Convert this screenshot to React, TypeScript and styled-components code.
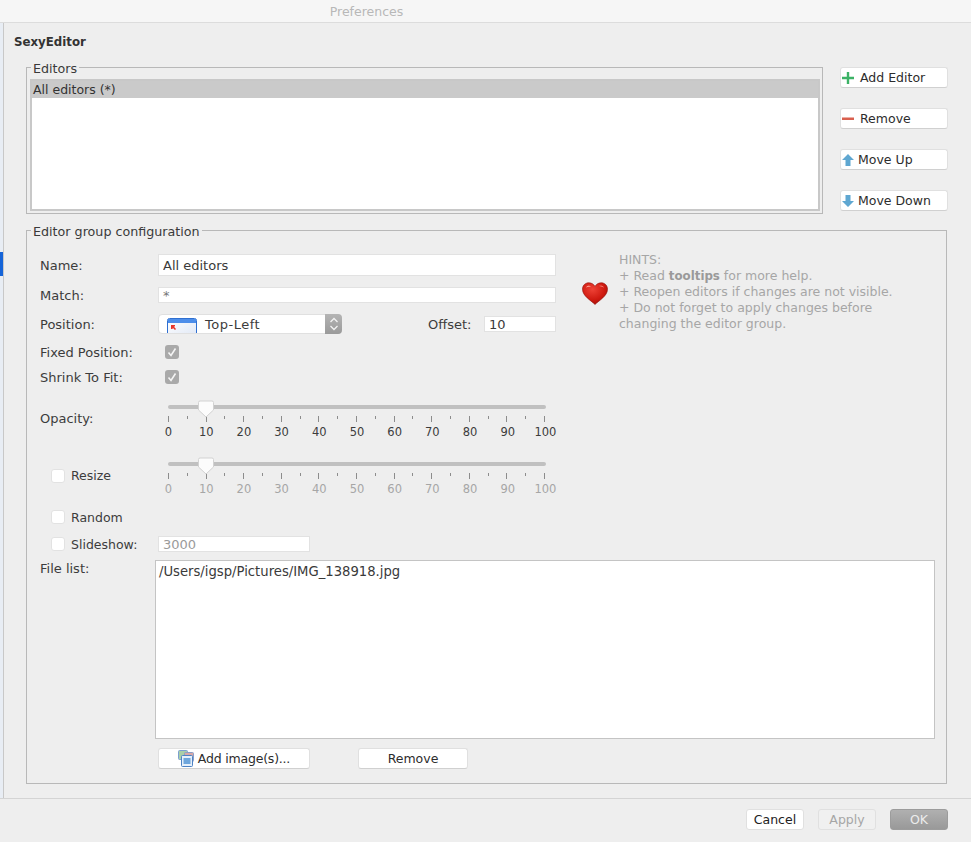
import styled, { createGlobalStyle } from "styled-components";

const GlobalStyle = createGlobalStyle`
    html, body {
        margin: 0;
        padding: 0;
        background: #eeeeee;
    }
    * {
        box-sizing: border-box;
    }
`

const FONT = `"DejaVu Sans", "Liberation Sans", sans-serif`

const PlusIcon = () => (
    <svg width="14" height="14" viewBox="0 0 14 14">
        <path d="M5.800 1h2.400v4.800H13v2.400H8.200V13H5.800V8.200H1V5.800h4.800z" fill="#3cb266" />
    </svg>
)

const MinusIcon = () => (
    <svg width="14" height="14" viewBox="0 0 14 14">
        <rect x="1" y="5.500" width="12" height="2.500" fill="#d9604f" />
    </svg>
)

const ArrowIcon = ({ down }: { down?: boolean }) => (
    <svg width="14" height="14" viewBox="0 0 14 14">
        <path
            d={down ? "M4.500 1h5v6H13l-6 6-6-6h3.500z" : "M7 1l6 6H9.500v6h-5V7H1z"}
            fill="#5fa7d1"
        />
    </svg>
)

const Heart = () => (
    <svg width="26" height="23" viewBox="0 0 26 23">
        <defs>
            <radialGradient id="heartFill" cx="0.4" cy="0.3" r="0.8">
                <stop offset="0" stopColor="#ee4236" />
                <stop offset="0.6" stopColor="#cf1a10" />
                <stop offset="1" stopColor="#9c0d08" />
            </radialGradient>
        </defs>
        <path
            d="M13 22.500C9 18.500 0.500 14 0.500 7.200 0.500 3.200 3.500 0.800 6.800 0.800c2.800 0 5 1.500 6.200 3.600C14.200 2.300 16.400 0.800 19.200 0.800c3.300 0 6.300 2.400 6.300 6.400C25.500 14 17 18.500 13 22.500z"
            fill="url(#heartFill)"
            stroke="#8d0f0a"
            strokeWidth="0.600"
        />
        <path d="M4 5.500c1-1.800 3.500-2.200 5-1-1.800 0-3.500 0.300-5 1z" fill="#ffb0a4" />
        <path d="M17 4c1.800-0.800 4-0.300 5 1.500-1.600-0.800-3.200-1.200-5-1.500z" fill="#ff9f93" />
    </svg>
)

const PositionIcon = () => (
    <svg width="30" height="15" viewBox="0 0 30 15">
        <defs>
            <linearGradient id="windowFill" x1="0" y1="0" x2="1" y2="1">
                <stop offset="0" stopColor="#ffffff" />
                <stop offset="1" stopColor="#dfe7f5" />
            </linearGradient>
        </defs>
        <rect x="0.500" y="0.500" width="29" height="18" rx="2" fill="url(#windowFill)" stroke="#2f6fd0" />
        <rect x="1" y="1" width="28" height="4" fill="#4d8eea" />
        <path d="M4 7h4v1.500H6.800L9 11l-1 1-2.300-2.300V11H4z" fill="#e8352a" />
    </svg>
)

const ImagesIcon = () => (
    <svg width="16" height="17" viewBox="0 0 16 17">
        <rect x="0.500" y="0.500" width="9" height="9" rx="1" fill="#a9cfa8" stroke="#7b9fd0" />
        <rect x="6.500" y="2.500" width="9" height="9" rx="1" fill="#d8a8a8" stroke="#8a9fc8" />
        <rect x="3.500" y="5.500" width="11" height="11" rx="1" fill="#e6f0fb" stroke="#4d82c4" />
        <rect x="5.500" y="8" width="7" height="6" fill="#6ea6dc" />
    </svg>
)

const CheckIcon = () => (
    <svg width="14" height="14" viewBox="0 0 14 14">
        <path d="M3.500 7.500l2.500 3 4.500-7" fill="none" stroke="#f4f4f4" strokeWidth="1.600" />
    </svg>
)

const StepperIcon = () => (
    <svg width="10" height="16" viewBox="0 0 10 16">
        <path d="M1.500 6L5 2.500 8.500 6M1.500 10L5 13.500 8.500 10" fill="none" stroke="#f2f2f2" strokeWidth="1.300" />
    </svg>
)

const ThumbIcon = () => (
    <svg width="18" height="18" viewBox="0 0 18 18">
        <path
            d="M3 1h12a1.500 1.500 0 0 1 1.500 1.500V10L9 17 1.500 10V2.500A1.500 1.500 0 0 1 3 1z"
            fill="#fcfcfc"
            stroke="#d2d2d2"
        />
    </svg>
)

type SliderPropsType = {
    value: number
    disabled?: boolean
}

const SCALE = Array.from({ length: 21 }, (_, i) => i * 5)
const NUMBERS = SCALE.filter((n) => n % 10 === 0)

const Slider = (props: SliderPropsType) => {
    return (
        <SliderBox>
            <SliderTrack />
            <SliderThumb style={{ left: `${(props.value / 100) * 377 - 9}px` }}>
                <ThumbIcon />
            </SliderThumb>
            <Ticks>
                {SCALE.map((n) => (
                    <Tick key={n} $major={n % 10 === 0} />
                ))}
            </Ticks>
            <TickLabels>
                {NUMBERS.map((n) => (
                    <TickLabel key={n} $disabled={props.disabled}>
                        <span>{n}</span>
                    </TickLabel>
                ))}
            </TickLabels>
        </SliderBox>
    );
}

const App = () => {
    return (
        <Window>
            <GlobalStyle />
            <TitleBar>Preferences</TitleBar>
            <Body>
                <Sidebar>
                    <SidebarMark />
                </Sidebar>
                <Main>
                    <PageTitle>SexyEditor</PageTitle>
                    <EditorsRow>
                        <EditorsGroup>
                            <GroupLegend $offset={1}>Editors</GroupLegend>
                            <EditorsList>
                                <EditorsItem>All editors (*)</EditorsItem>
                            </EditorsList>
                        </EditorsGroup>
                        <SideButtons>
                            <SideButton $textGap={5}><PlusIcon />Add Editor</SideButton>
                            <SideButton $textGap={5}><MinusIcon />Remove</SideButton>
                            <SideButton $textGap={3}><ArrowIcon />Move Up</SideButton>
                            <SideButton $textGap={3}><ArrowIcon down />Move Down</SideButton>
                        </SideButtons>
                    </EditorsRow>

                    <ConfigGroup>
                        <GroupLegend $offset={-9}>Editor group configuration</GroupLegend>
                        <TopArea>
                            <FormColumn>
                                <NameRow>
                                    <FieldLabel>Name:</FieldLabel>
                                    <NameInput readOnly value="All editors" />
                                </NameRow>
                                <MatchRow>
                                    <FieldLabel>Match:</FieldLabel>
                                    <MatchInput readOnly value="*" />
                                </MatchRow>
                                <PositionRow>
                                    <FieldLabel>Position:</FieldLabel>
                                    <SelectBox>
                                        <SelectIcon><PositionIcon /></SelectIcon>
                                        <SelectText>Top-Left</SelectText>
                                        <SelectStepper><StepperIcon /></SelectStepper>
                                    </SelectBox>
                                    <OffsetLabel>Offset:</OffsetLabel>
                                    <OffsetInput readOnly value="10" />
                                </PositionRow>
                                <CheckRow>
                                    <FieldLabel>Fixed Position:</FieldLabel>
                                    <GrayCheck><CheckIcon /></GrayCheck>
                                </CheckRow>
                                <CheckRow>
                                    <FieldLabel>Shrink To Fit:</FieldLabel>
                                    <GrayCheck><CheckIcon /></GrayCheck>
                                </CheckRow>
                                <OpacityRow>
                                    <FieldLabel>Opacity:</FieldLabel>
                                    <Slider value={10} />
                                </OpacityRow>
                                <ResizeRow>
                                    <OptionLabel $width={118}>
                                        <EmptyCheck />
                                        Resize
                                    </OptionLabel>
                                    <Slider value={10} disabled />
                                </ResizeRow>
                                <RandomRow>
                                    <OptionLabel $width={118}>
                                        <EmptyCheck />
                                        Random
                                    </OptionLabel>
                                </RandomRow>
                                <SlideshowRow>
                                    <OptionLabel $width={118}>
                                        <EmptyCheck />
                                        Slideshow:
                                    </OptionLabel>
                                    <SlideshowInput readOnly value="3000" />
                                </SlideshowRow>
                            </FormColumn>
                            <HintsPanel>
                                <HeartBox><Heart /></HeartBox>
                                <HintsText>
                                    HINTS:<br />
                                    + Read <b>tooltips</b> for more help.<br />
                                    + Reopen editors if changes are not visible.<br />
                                    + Do not forget to apply changes before<br />
                                    changing the editor group.
                                </HintsText>
                            </HintsPanel>
                        </TopArea>
                        <FileListRow>
                            <FileListLabel>File list:</FileListLabel>
                            <FileList>/Users/igsp/Pictures/IMG_138918.jpg</FileList>
                        </FileListRow>
                        <FileButtons>
                            <FileButton $width={152}><ImagesIcon /><span>Add image(s)...</span></FileButton>
                            <FileButton $width={110}>Remove</FileButton>
                        </FileButtons>
                    </ConfigGroup>
                </Main>
            </Body>
            <Footer>
                <FooterButton>Cancel</FooterButton>
                <FooterButton $kind="disabled">Apply</FooterButton>
                <FooterButton $kind="default">OK</FooterButton>
            </Footer>
        </Window>
    );
}

export default App

const Window = styled.div`
    width: 971px;
    height: 842px;
    display: flex;
    flex-direction: column;
    overflow: hidden;
    background: #eeeeee;
    font-family: ${FONT};
    font-size: 12.5px;
    color: #3c3c3c;
`

const TitleBar = styled.div`
    height: 23px;
    flex: none;
    padding-right: 238px;
    background: #f6f6f6;
    border-bottom: 1px solid #dcdcdc;
    font-size: 12.5px;
    line-height: 23px;
    text-align: center;
    color: #b8b8b8;
`

const Body = styled.div`
    flex: 1;
    display: flex;
    min-height: 0;
`

const Sidebar = styled.div`
    width: 4px;
    flex: none;
    padding-top: 229px;
    background: #e8edf4;
    border-right: 1px solid #c8c8c8;
`

const SidebarMark = styled.div`
    height: 24px;
    background: #1564d8;
`

const Main = styled.div`
    flex: 1;
    padding: 11px 24px 0 10px;
`

const PageTitle = styled.div`
    height: 16px;
    font-size: 11.8px;
    font-weight: 700;
    line-height: 16px;
    color: #333333;
`

const EditorsRow = styled.div`
    display: flex;
    align-items: flex-start;
    gap: 17px;
    margin-top: 9px;
    padding-left: 12px;
`

const EditorsGroup = styled.fieldset`
    width: 797px;
    height: 155px;
    flex: none;
    margin: 0;
    padding: 4px 2px 2px 3px;
    border: 1px solid #b8b8b8;
`

const GroupLegend = styled.legend<{ $offset: number }>`
    margin-left: ${(p) => p.$offset}px;
    padding: 3px 2px 0;
    height: 16px;
    font-size: 12.7px;
    line-height: 14px;
    color: #3a3a3a;
`

const EditorsList = styled.div`
    height: 132px;
    background: #ffffff;
    border: 2px solid #c8c8c8;
`

const EditorsItem = styled.div`
    height: 17px;
    padding-left: 1px;
    background: #cacaca;
    line-height: 17px;
    color: #333333;
`

const SideButtons = styled.div`
    display: flex;
    flex-direction: column;
    gap: 20px;
    margin-top: 8px;
`

const SideButton = styled.div<{ $textGap: number }>`
    width: 108px;
    height: 21px;
    display: flex;
    align-items: center;
    gap: ${(p) => p.$textGap}px;
    background: #ffffff;
    border: 1px solid #e0e0e0;
    border-bottom-color: #d0d0d0;
    border-radius: 3px;
    color: #2c2c2c;
`

const ConfigGroup = styled.fieldset`
    width: 921px;
    height: 562px;
    margin: 8px 0 0 12px;
    padding: 16px 11px 0 13px;
    border: 1px solid #b8b8b8;
`

const TopArea = styled.div`
    display: flex;
    align-items: flex-start;
`

const FormColumn = styled.div`
    width: 516px;
    flex: none;
    display: flex;
    flex-direction: column;
`

const FieldRow = styled.div`
    display: flex;
    align-items: center;
`

const NameRow = styled(FieldRow)`
    height: 22px;
`

const MatchRow = styled(FieldRow)`
    height: 16px;
    margin-top: 11px;
`

const PositionRow = styled(FieldRow)`
    height: 20px;
    margin-top: 11px;
`

const CheckRow = styled(FieldRow)`
    height: 14px;
    margin-top: 11px;
`

const OpacityRow = styled(FieldRow)`
    align-items: flex-start;
    height: 40px;
    margin-top: 16px;
`

const ResizeRow = styled(FieldRow)`
    align-items: flex-start;
    height: 40px;
    margin-top: 17px;
`

const RandomRow = styled(FieldRow)`
    height: 14px;
    margin-top: 13px;
`

const SlideshowRow = styled(FieldRow)`
    height: 16px;
    margin-top: 12px;
`

const FieldLabel = styled.label`
    width: 118px;
    flex: none;
    font-size: 13px;
    color: #3c3c3c;

    ${OpacityRow} & {
        margin-top: 11px;
    }
`

const TextInput = styled.input`
    display: block;
    margin: 0;
    padding: 0 4px;
    background: #ffffff;
    border: 1px solid #e2e2e2;
    outline: none;
    font-family: ${FONT};
    font-size: 13px;
    color: #3a3a3a;
`

const NameInput = styled(TextInput)`
    width: 398px;
    height: 22px;
`

const MatchInput = styled(TextInput)`
    width: 398px;
    height: 16px;
    color: #777777;
`

const OffsetInput = styled(TextInput)`
    width: 72px;
    height: 16px;
`

const SlideshowInput = styled(TextInput)`
    width: 152px;
    height: 16px;
    color: #9a9a9a;
`

const SelectBox = styled.div`
    width: 184px;
    height: 20px;
    flex: none;
    display: flex;
    align-items: flex-end;
    background: #ffffff;
    border: 1px solid #e0e0e0;
    border-radius: 4px;
`

const SelectIcon = styled.div`
    width: 46px;
    height: 15px;
    flex: none;
    padding-left: 8px;
    overflow: hidden;
`

const SelectText = styled.div`
    flex: 1;
    align-self: center;
    font-size: 13px;
    letter-spacing: 0.5px;
    color: #3c3c3c;
`

const SelectStepper = styled.div`
    width: 17px;
    height: 20px;
    flex: none;
    align-self: center;
    display: flex;
    align-items: center;
    justify-content: center;
    margin-right: -1px;
    background: linear-gradient(#b4b4b4, #9a9a9a);
    border-radius: 0 4px 4px 0;
`

const OffsetLabel = styled.label`
    margin-left: 86px;
    width: 56px;
    flex: none;
    font-size: 13px;
    color: #3c3c3c;
`

const GrayCheck = styled.div`
    width: 14px;
    height: 14px;
    margin-left: 7px;
    background: #a9a9a9;
    border-radius: 3px;
`

const EmptyCheck = styled.div`
    width: 14px;
    height: 14px;
    flex: none;
    background: #ffffff;
    border: 1px solid #e2e2e2;
    border-radius: 3px;
`

const OptionLabel = styled.label<{ $width: number }>`
    width: ${(p) => p.$width}px;
    flex: none;
    display: flex;
    align-items: center;
    gap: 6px;
    padding-left: 11px;
    color: #3c3c3c;

    ${ResizeRow} & {
        margin-top: 11px;
    }
`

const SliderBox = styled.div`
    position: relative;
    width: 378px;
    margin-left: 10px;
    padding-top: 5px;
`

const SliderTrack = styled.div`
    height: 4px;
    background: #c0c0c0;
    border-radius: 2px;
`

const SliderThumb = styled.div`
    position: absolute;
    top: 0;
    line-height: 0;
`

const Ticks = styled.div`
    display: flex;
    justify-content: space-between;
    align-items: flex-start;
    height: 6px;
    margin-top: 7px;
    padding-right: 1px;
`

const Tick = styled.div<{ $major: boolean }>`
    width: 1px;
    height: ${(p) => (p.$major ? 6 : 3)}px;
    background: #8c8c8c;
`

const TickLabels = styled.div`
    display: flex;
    justify-content: space-between;
    height: 14px;
    margin-top: 3px;
`

const TickLabel = styled.div<{ $disabled?: boolean }>`
    width: 1px;
    display: flex;
    justify-content: center;
    font-size: 11.5px;
    line-height: 14px;
    color: ${(p) => (p.$disabled ? "#a6a6a6" : "#3c3c3c")};
`

const HintsPanel = styled.div`
    display: flex;
    margin-left: 26px;
    margin-top: -2px;
`

const HeartBox = styled.div`
    width: 37px;
    flex: none;
    padding-top: 30px;
`

const HintsText = styled.div`
    font-size: 12.5px;
    line-height: 16px;
    color: #a6a6a6;

    b {
        font-size: 11.8px;
        font-weight: 700;
        color: #9a9a9a;
    }
`

const FileListRow = styled.div`
    display: flex;
    margin-top: 8px;
`

const FileListLabel = styled.label`
    width: 115px;
    flex: none;
    padding-top: 1px;
    font-size: 13px;
    line-height: 16px;
`

const FileList = styled.div`
    width: 780px;
    height: 179px;
    padding: 3px 3px;
    background: #ffffff;
    border: 1px solid #c4c4c4;
    font-size: 13.2px;
    line-height: 16px;
    color: #3a3a3a;
`

const FileButtons = styled.div`
    display: flex;
    gap: 48px;
    margin-top: 9px;
    margin-left: 118px;
`

const FileButton = styled.div<{ $width: number }>`
    width: ${(p) => p.$width}px;
    height: 21px;
    display: flex;
    align-items: center;
    justify-content: center;
    gap: 4px;
    background: #ffffff;
    border: 1px solid #e0e0e0;
    border-bottom-color: #d0d0d0;
    border-radius: 3px;
    color: #2c2c2c;

    span {
        letter-spacing: -0.2px;
    }
`

const Footer = styled.div`
    height: 44px;
    flex: none;
    display: flex;
    justify-content: flex-end;
    gap: 14px;
    padding: 10px 23px 0 0;
    background: #eeeeee;
    border-top: 1px solid #d4d4d4;
`

const FooterButton = styled.div<{ $kind?: "disabled" | "default" }>`
    width: 58px;
    height: 21px;
    display: flex;
    align-items: center;
    justify-content: center;
    border-radius: 3px;
    border: 1px solid ${(p) => (p.$kind === "default" ? "#9c9c9c" : "#e0e0e0")};
    background: ${(p) =>
        p.$kind === "default"
            ? "linear-gradient(#b0b0b0, #999999)"
            : p.$kind === "disabled"
                ? "#f0f0f0"
                : "#ffffff"};
    color: ${(p) =>
        p.$kind === "default" ? "#ececec" : p.$kind === "disabled" ? "#a6a6a6" : "#222222"};
`
